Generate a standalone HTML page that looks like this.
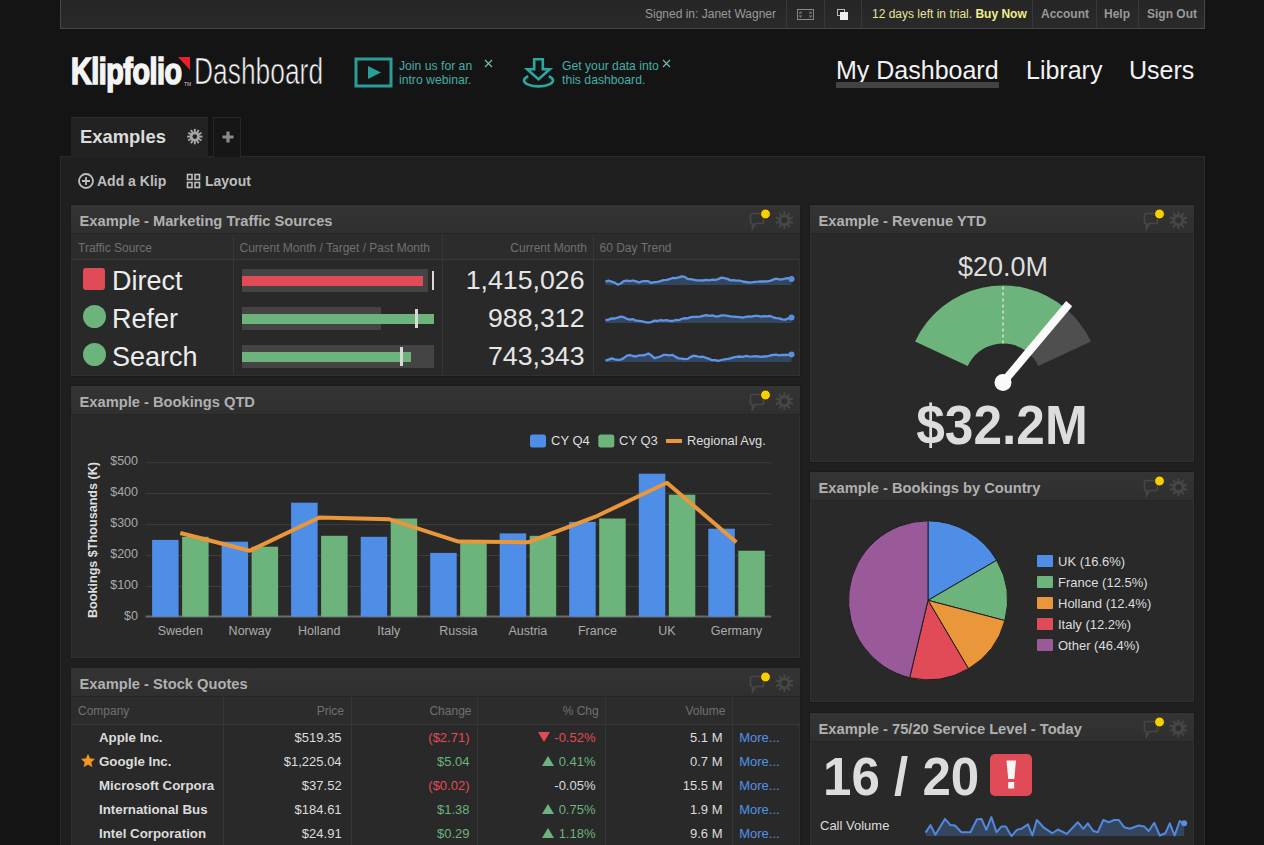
<!DOCTYPE html>
<html><head><meta charset="utf-8">
<style>
*{margin:0;padding:0;box-sizing:border-box}
html,body{width:1264px;height:845px;overflow:hidden;background:#141414;font-family:"Liberation Sans",sans-serif;color:#ccc}
.a{position:absolute;white-space:nowrap}
#topbar{left:60px;top:0;width:1145px;height:29px;background:linear-gradient(#252525,#2a2a2a);border:1px solid #474747;border-top:none}
.tb{position:absolute;top:0;height:28px;line-height:28px;font-size:12px;color:#9a9a9a;white-space:nowrap}
.sep{position:absolute;top:0;width:1px;height:28px;background:#383838}
#main{left:60px;top:156px;width:1145px;height:700px;background:#1f1f1f;border-left:1px solid #2a2a2a;border-top:1px solid #2a2a2a;border-right:1px solid #2c2c2c}
.klip{position:absolute;background:#292929;overflow:hidden;box-shadow:0 0 0 1px #1b1b1b,inset 0 0 0 1px #313131}
.kh{position:absolute;left:0;top:0;right:0;height:29px;background:linear-gradient(#343434,#2f2f2f);border-bottom:1px solid #262626}
.kt{position:absolute;left:8.5px;top:2px;line-height:29px;font-size:14.7px;font-weight:bold;color:#b0b0b0;white-space:nowrap}
.ki{position:absolute;top:3px;right:5px;width:48px;height:24px}
.promo{position:absolute;font-size:12.2px;line-height:14px;color:#45aea6;white-space:nowrap}
.nav{position:absolute;top:54.5px;font-size:25px;line-height:30px;color:#f2f2f2}
</style></head><body>
<!-- top bar -->
<div id="topbar" class="a">
  <div class="tb" style="left:584px">Signed in: Janet Wagner</div>
  <div class="sep" style="left:725px"></div>
  <svg class="a" style="left:736px;top:9px" width="17" height="11" viewBox="0 0 18 11" preserveAspectRatio="none"><rect x="0.5" y="0.5" width="17" height="10" fill="none" stroke="#8a8a8a"/><path d="M3 3l2 2M3 3h2M3 3v2M15 3l-2 2M15 3h-2M15 3v2M3 8l2-2M3 8h2M3 8v-2M15 8l-2-2M15 8h-2M15 8v-2" stroke="#8a8a8a" stroke-width="0.8" fill="none"/></svg>
  <div class="sep" style="left:763px"></div>
  <svg class="a" style="left:776px;top:9px" width="12" height="12" viewBox="0 0 12 12"><rect x="0.5" y="0.5" width="7" height="6" fill="#242424" stroke="#bbb"/><rect x="3" y="3" width="8" height="8" fill="#eee"/></svg>
  <div class="sep" style="left:800px"></div>
  <div class="tb" style="left:811px;color:#e6e39a">12 days left in trial. <b style="color:#f0ee8c">Buy Now</b></div>
  <div class="sep" style="left:971px"></div>
  <div class="tb" style="left:980px;font-weight:bold">Account</div>
  <div class="sep" style="left:1035px"></div>
  <div class="tb" style="left:1043px;font-weight:bold">Help</div>
  <div class="sep" style="left:1077px"></div>
  <div class="tb" style="left:1086px;font-weight:bold">Sign Out</div>
</div>

<!-- logo -->
<div class="a" style="left:71px;top:53px;font-size:37px;line-height:38px;font-weight:bold;color:#f4f4f4;-webkit-text-stroke:1.7px #f4f4f4;transform:scaleX(0.775);transform-origin:0 0;letter-spacing:-0.6px">Klipfolio</div>
<svg class="a" style="left:177px;top:56px" width="14" height="16"><path d="M1 1H13V14Z" fill="#e8202a"/></svg>
<div class="a" style="left:184px;top:82px;font-size:5px;line-height:5px;color:#ccc">TM</div>
<div class="a" style="left:194px;top:52.5px;font-size:37px;line-height:38px;color:#f4f4f4;-webkit-text-stroke:0.7px #141414;transform:scaleX(0.713);transform-origin:0 0">Dashboard</div>

<!-- promos -->
<svg class="a" style="left:354px;top:57px" width="39" height="31"><rect x="2" y="2" width="35" height="27" fill="none" stroke="#2a9d98" stroke-width="3"/><path d="M14 9L27 15.5L14 22Z" fill="#2a9d98"/></svg>
<div class="promo" style="left:399px;top:59px">Join us for an<br>intro webinar.</div>
<svg class="a" style="left:484px;top:59px" width="9" height="9"><path d="M1 1L8 8M8 1L1 8" stroke="#74c2b6" stroke-width="1.1"/></svg>
<svg class="a" style="left:521px;top:56px" width="34" height="32"><path d="M13.2 3.3H21.8V13.2H28.8L17.5 23.2L6.2 13.2H13.2Z" fill="none" stroke="#2aa79f" stroke-width="2.6" stroke-linejoin="miter"/><path d="M7.2 20.2A14.5 6 0 1 0 27.8 20.2" fill="none" stroke="#2aa79f" stroke-width="2.6"/></svg>
<div class="promo" style="left:562px;top:59px">Get your data into<br>this dashboard.</div>
<svg class="a" style="left:662px;top:59px" width="9" height="9"><path d="M1 1L8 8M8 1L1 8" stroke="#74c2b6" stroke-width="1.1"/></svg>

<!-- nav -->
<div class="nav" style="left:836px">My Dashboard</div>
<div class="a" style="left:836px;top:82px;width:163px;height:6px;background:#434343"></div>
<div class="nav" style="left:1026px">Library</div>
<div class="nav" style="left:1129px">Users</div>

<!-- tabs -->
<div id="main" class="a"></div>
<div class="a" style="left:71px;top:117px;width:137px;height:41px;background:#222;border-top:1px solid #2c2c2c"></div>
<div class="a" style="left:80px;top:126px;font-size:18.4px;line-height:22px;font-weight:bold;color:#dcdcdc">Examples</div>
<svg class="a" style="left:186px;top:128px" width="18" height="18" viewBox="0 0 18 18"><g transform="translate(8.8 8.6)" fill="#a6a6a6"><circle r="4.9"/><rect x="-0.95" y="-7.7" width="1.9" height="3.8" transform="rotate(0)"/><rect x="-0.95" y="-7.7" width="1.9" height="3.8" transform="rotate(30)"/><rect x="-0.95" y="-7.7" width="1.9" height="3.8" transform="rotate(60)"/><rect x="-0.95" y="-7.7" width="1.9" height="3.8" transform="rotate(90)"/><rect x="-0.95" y="-7.7" width="1.9" height="3.8" transform="rotate(120)"/><rect x="-0.95" y="-7.7" width="1.9" height="3.8" transform="rotate(150)"/><rect x="-0.95" y="-7.7" width="1.9" height="3.8" transform="rotate(180)"/><rect x="-0.95" y="-7.7" width="1.9" height="3.8" transform="rotate(210)"/><rect x="-0.95" y="-7.7" width="1.9" height="3.8" transform="rotate(240)"/><rect x="-0.95" y="-7.7" width="1.9" height="3.8" transform="rotate(270)"/><rect x="-0.95" y="-7.7" width="1.9" height="3.8" transform="rotate(300)"/><rect x="-0.95" y="-7.7" width="1.9" height="3.8" transform="rotate(330)"/><circle r="2.3" fill="#222"/></g></svg>
<div class="a" style="left:213px;top:117px;width:28px;height:40px;background:#161616;border:1px solid #262626;border-bottom:none"></div>
<svg class="a" style="left:221.6px;top:130.6px" width="12" height="12"><path d="M6 0.5V11.5M0.5 6H11.5" stroke="#8a8a8a" stroke-width="3.2"/></svg>

<!-- toolbar -->
<svg class="a" style="left:77px;top:172px" width="18" height="18"><circle cx="9" cy="9" r="7" fill="none" stroke="#bdbdbd" stroke-width="1.8"/><path d="M9 5V13M5 9H13" stroke="#bdbdbd" stroke-width="1.8"/></svg>
<div class="a" style="left:97px;top:172px;font-size:14px;line-height:18px;font-weight:bold;color:#bdbdbd">Add a Klip</div>
<svg class="a" style="left:186px;top:173px" width="15" height="16"><g fill="none" stroke="#bdbdbd" stroke-width="1.6"><rect x="1.5" y="1.5" width="4.5" height="5"/><rect x="9" y="1.5" width="4.5" height="5"/><rect x="1.5" y="9.5" width="4.5" height="5"/><rect x="9" y="9.5" width="4.5" height="5"/></g></svg>
<div class="a" style="left:205px;top:172px;font-size:14px;line-height:18px;font-weight:bold;color:#bdbdbd">Layout</div>

<div class="klip" style="left:71px;top:205px;width:729px;height:171px" id="k1"><div class="kh"><div class="kt">Example - Marketing Traffic Sources</div><svg class="ki" viewBox="0 0 48 24"><path d="M5 5.5h10a1.5 1.5 0 0 1 1.5 1.5v7a1.5 1.5 0 0 1-1.5 1.5h-6.5l-3 5v-5h-0.5a1.5 1.5 0 0 1-1.5-1.5v-7a1.5 1.5 0 0 1 1.5-1.5z" fill="none" stroke="#474747" stroke-width="1.7"/><circle cx="18.5" cy="6" r="4.9" fill="#f7d000" stroke="#2a2010" stroke-width="0.8"/><g transform="translate(37.4 12.2)" fill="#474747"><circle r="6"/><rect x="-1" y="-8.9" width="2" height="4.2" transform="rotate(0)"/><rect x="-1" y="-8.9" width="2" height="4.2" transform="rotate(36)"/><rect x="-1" y="-8.9" width="2" height="4.2" transform="rotate(72)"/><rect x="-1" y="-8.9" width="2" height="4.2" transform="rotate(108)"/><rect x="-1" y="-8.9" width="2" height="4.2" transform="rotate(144)"/><rect x="-1" y="-8.9" width="2" height="4.2" transform="rotate(180)"/><rect x="-1" y="-8.9" width="2" height="4.2" transform="rotate(216)"/><rect x="-1" y="-8.9" width="2" height="4.2" transform="rotate(252)"/><rect x="-1" y="-8.9" width="2" height="4.2" transform="rotate(288)"/><rect x="-1" y="-8.9" width="2" height="4.2" transform="rotate(324)"/><circle r="3" fill="#2f2f2f"/></g></svg></div><div class="a" style="left:0;top:29px;width:729px;height:26px;background:#2c2c2c;border-bottom:1px solid #3a3a3a"></div><div class="a" style="left:162px;top:29px;width:1px;height:140px;background:#363636"></div><div class="a" style="left:371px;top:29px;width:1px;height:140px;background:#363636"></div><div class="a" style="left:522px;top:29px;width:1px;height:140px;background:#363636"></div><div class="a" style="left:7px;top:35.8px;font-size:12px;line-height:14px;color:#707070;font-weight:400;">Traffic Source</div><div class="a" style="left:168.5px;top:35.8px;font-size:12px;line-height:14px;color:#707070;font-weight:400;">Current Month / Target / Past Month</div><div class="a" style="right:213px;top:35.8px;font-size:12px;line-height:14px;color:#707070;font-weight:400;">Current Month</div><div class="a" style="left:528.5px;top:35.8px;font-size:12px;line-height:14px;color:#707070;font-weight:400;">60 Day Trend</div><div class="a" style="left:12px;top:63.30000000000001px;width:22px;height:22px;border-radius:3px;background:#e14b57"></div><div class="a" style="left:41px;top:59.6px;font-size:27px;line-height:32px;color:#ececec;font-weight:400;">Direct</div><div class="a" style="right:215.5px;top:58.7px;font-size:26.7px;line-height:32px;color:#e6e6e6;font-weight:400;">1,415,026</div><div class="a" style="left:11.5px;top:100.39999999999998px;width:23px;height:23px;border-radius:50%;background:#6cb37c"></div><div class="a" style="left:41px;top:97.6px;font-size:27px;line-height:32px;color:#ececec;font-weight:400;">Refer</div><div class="a" style="right:215.5px;top:96.7px;font-size:26.7px;line-height:32px;color:#e6e6e6;font-weight:400;">988,312</div><div class="a" style="left:11.5px;top:138.39999999999998px;width:23px;height:23px;border-radius:50%;background:#6cb37c"></div><div class="a" style="left:41px;top:135.6px;font-size:27px;line-height:32px;color:#ececec;font-weight:400;">Search</div><div class="a" style="right:215.5px;top:134.7px;font-size:26.7px;line-height:32px;color:#e6e6e6;font-weight:400;">743,343</div><div class="a" style="left:171px;top:63.5px;width:186px;height:23px;background:#444"></div><div class="a" style="left:171px;top:70.5px;width:181px;height:10px;background:#e14b57"></div><div class="a" style="left:361.0px;top:65.5px;width:2px;height:19.5px;background:#d8d8d8"></div><div class="a" style="left:171px;top:101.5px;width:139px;height:23px;background:#444"></div><div class="a" style="left:171px;top:108.5px;width:192px;height:10px;background:#6cb37c"></div><div class="a" style="left:344.0px;top:103.5px;width:3px;height:19.5px;background:#d8d8d8"></div><div class="a" style="left:171px;top:139.5px;width:192px;height:23px;background:#444"></div><div class="a" style="left:171px;top:146.5px;width:168.5px;height:10px;background:#6cb37c"></div><div class="a" style="left:328.5px;top:141.5px;width:3px;height:19.5px;background:#d8d8d8"></div><svg class="a" style="left:0;top:0" width="729" height="170"><polygon points="534.5,80 534.5,76.6 537.6,75.7 540.6,76.6 543.7,77.6 546.7,79.6 549.8,78.5 552.8,76.1 555.9,75.6 558.9,76.2 562.0,75.5 565.0,76.3 568.1,77.5 571.1,76.3 574.2,76.2 577.2,76.2 580.3,77.9 583.3,77.2 586.4,76.8 589.4,76.2 592.4,75.2 595.5,74.8 598.5,74.2 601.6,73.0 604.6,73.1 607.7,72.3 610.7,71.3 613.8,71.8 616.8,74.1 619.9,74.2 622.9,74.8 626.0,75.4 629.0,75.3 632.1,75.5 635.1,74.9 638.2,75.3 641.2,74.6 644.3,74.8 647.3,74.1 650.4,72.6 653.4,73.1 656.5,73.9 659.5,75.4 662.5,75.2 665.6,75.7 668.6,75.7 671.7,76.5 674.7,77.0 677.8,77.5 680.8,77.3 683.9,76.8 686.9,76.7 690.0,76.3 693.0,76.5 696.1,76.3 699.1,75.8 702.2,74.7 705.2,73.7 708.3,74.5 711.3,74.4 714.4,73.5 717.4,73.2 720.5,73.9 720.5,80" fill="#34455e"/><polyline points="534.5,76.6 537.6,75.7 540.6,76.6 543.7,77.6 546.7,79.6 549.8,78.5 552.8,76.1 555.9,75.6 558.9,76.2 562.0,75.5 565.0,76.3 568.1,77.5 571.1,76.3 574.2,76.2 577.2,76.2 580.3,77.9 583.3,77.2 586.4,76.8 589.4,76.2 592.4,75.2 595.5,74.8 598.5,74.2 601.6,73.0 604.6,73.1 607.7,72.3 610.7,71.3 613.8,71.8 616.8,74.1 619.9,74.2 622.9,74.8 626.0,75.4 629.0,75.3 632.1,75.5 635.1,74.9 638.2,75.3 641.2,74.6 644.3,74.8 647.3,74.1 650.4,72.6 653.4,73.1 656.5,73.9 659.5,75.4 662.5,75.2 665.6,75.7 668.6,75.7 671.7,76.5 674.7,77.0 677.8,77.5 680.8,77.3 683.9,76.8 686.9,76.7 690.0,76.3 693.0,76.5 696.1,76.3 699.1,75.8 702.2,74.7 705.2,73.7 708.3,74.5 711.3,74.4 714.4,73.5 717.4,73.2 720.5,73.9" fill="none" stroke="#5f95e8" stroke-width="2.3" stroke-linejoin="round"/><circle cx="720.5" cy="73.9" r="3" fill="#5a8fe0"/><polygon points="534.5,118 534.5,115.1 537.6,114.6 540.6,113.4 543.7,113.5 546.7,112.6 549.8,111.7 552.8,112.2 555.9,113.8 558.9,114.7 562.0,114.2 565.0,115.7 568.1,115.8 571.1,116.3 574.2,117.1 577.2,117.7 580.3,117.2 583.3,115.6 586.4,116.0 589.4,115.1 592.4,115.6 595.5,115.2 598.5,115.8 601.6,116.0 604.6,115.0 607.7,115.2 610.7,114.0 613.8,113.2 616.8,113.3 619.9,112.1 622.9,111.9 626.0,111.8 629.0,111.7 632.1,110.8 635.1,110.2 638.2,110.8 641.2,110.3 644.3,111.4 647.3,111.3 650.4,110.4 653.4,110.4 656.5,110.8 659.5,111.3 662.5,111.6 665.6,111.9 668.6,112.2 671.7,112.6 674.7,111.8 677.8,111.5 680.8,111.6 683.9,110.9 686.9,110.8 690.0,111.6 693.0,111.2 696.1,111.4 699.1,111.0 702.2,112.3 705.2,113.2 708.3,113.3 711.3,114.3 714.4,114.6 717.4,113.3 720.5,112.5 720.5,118" fill="#34455e"/><polyline points="534.5,115.1 537.6,114.6 540.6,113.4 543.7,113.5 546.7,112.6 549.8,111.7 552.8,112.2 555.9,113.8 558.9,114.7 562.0,114.2 565.0,115.7 568.1,115.8 571.1,116.3 574.2,117.1 577.2,117.7 580.3,117.2 583.3,115.6 586.4,116.0 589.4,115.1 592.4,115.6 595.5,115.2 598.5,115.8 601.6,116.0 604.6,115.0 607.7,115.2 610.7,114.0 613.8,113.2 616.8,113.3 619.9,112.1 622.9,111.9 626.0,111.8 629.0,111.7 632.1,110.8 635.1,110.2 638.2,110.8 641.2,110.3 644.3,111.4 647.3,111.3 650.4,110.4 653.4,110.4 656.5,110.8 659.5,111.3 662.5,111.6 665.6,111.9 668.6,112.2 671.7,112.6 674.7,111.8 677.8,111.5 680.8,111.6 683.9,110.9 686.9,110.8 690.0,111.6 693.0,111.2 696.1,111.4 699.1,111.0 702.2,112.3 705.2,113.2 708.3,113.3 711.3,114.3 714.4,114.6 717.4,113.3 720.5,112.5" fill="none" stroke="#5f95e8" stroke-width="2.3" stroke-linejoin="round"/><circle cx="720.5" cy="112.5" r="3" fill="#5a8fe0"/><polygon points="534.5,157 534.5,155.7 537.6,154.6 540.6,153.4 543.7,154.4 546.7,154.8 549.8,154.6 552.8,153.1 555.9,150.7 558.9,150.1 562.0,151.0 565.0,151.5 568.1,150.4 571.1,150.4 574.2,150.0 577.2,148.4 580.3,150.3 583.3,153.2 586.4,152.4 589.4,151.5 592.4,149.9 595.5,149.9 598.5,150.3 601.6,149.9 604.6,151.9 607.7,153.4 610.7,153.7 613.8,154.2 616.8,153.9 619.9,151.8 622.9,150.7 626.0,151.3 629.0,152.0 632.1,151.7 635.1,152.9 638.2,153.9 641.2,155.2 644.3,155.1 647.3,155.9 650.4,155.0 653.4,154.3 656.5,153.9 659.5,153.3 662.5,152.3 665.6,151.9 668.6,151.5 671.7,151.8 674.7,151.0 677.8,151.4 680.8,151.6 683.9,151.1 686.9,151.5 690.0,151.9 693.0,151.5 696.1,151.4 699.1,150.5 702.2,149.9 705.2,149.7 708.3,150.3 711.3,149.8 714.4,150.0 717.4,149.8 720.5,149.4 720.5,157" fill="#34455e"/><polyline points="534.5,155.7 537.6,154.6 540.6,153.4 543.7,154.4 546.7,154.8 549.8,154.6 552.8,153.1 555.9,150.7 558.9,150.1 562.0,151.0 565.0,151.5 568.1,150.4 571.1,150.4 574.2,150.0 577.2,148.4 580.3,150.3 583.3,153.2 586.4,152.4 589.4,151.5 592.4,149.9 595.5,149.9 598.5,150.3 601.6,149.9 604.6,151.9 607.7,153.4 610.7,153.7 613.8,154.2 616.8,153.9 619.9,151.8 622.9,150.7 626.0,151.3 629.0,152.0 632.1,151.7 635.1,152.9 638.2,153.9 641.2,155.2 644.3,155.1 647.3,155.9 650.4,155.0 653.4,154.3 656.5,153.9 659.5,153.3 662.5,152.3 665.6,151.9 668.6,151.5 671.7,151.8 674.7,151.0 677.8,151.4 680.8,151.6 683.9,151.1 686.9,151.5 690.0,151.9 693.0,151.5 696.1,151.4 699.1,150.5 702.2,149.9 705.2,149.7 708.3,150.3 711.3,149.8 714.4,150.0 717.4,149.8 720.5,149.4" fill="none" stroke="#5f95e8" stroke-width="2.3" stroke-linejoin="round"/><circle cx="720.5" cy="149.4" r="3" fill="#5a8fe0"/></svg></div>
<div class="klip" style="left:810px;top:205px;width:384px;height:257px" id="k2"><div class="kh"><div class="kt">Example - Revenue YTD</div><svg class="ki" viewBox="0 0 48 24"><path d="M5 5.5h10a1.5 1.5 0 0 1 1.5 1.5v7a1.5 1.5 0 0 1-1.5 1.5h-6.5l-3 5v-5h-0.5a1.5 1.5 0 0 1-1.5-1.5v-7a1.5 1.5 0 0 1 1.5-1.5z" fill="none" stroke="#474747" stroke-width="1.7"/><circle cx="18.5" cy="6" r="4.9" fill="#f7d000" stroke="#2a2010" stroke-width="0.8"/><g transform="translate(37.4 12.2)" fill="#474747"><circle r="6"/><rect x="-1" y="-8.9" width="2" height="4.2" transform="rotate(0)"/><rect x="-1" y="-8.9" width="2" height="4.2" transform="rotate(36)"/><rect x="-1" y="-8.9" width="2" height="4.2" transform="rotate(72)"/><rect x="-1" y="-8.9" width="2" height="4.2" transform="rotate(108)"/><rect x="-1" y="-8.9" width="2" height="4.2" transform="rotate(144)"/><rect x="-1" y="-8.9" width="2" height="4.2" transform="rotate(180)"/><rect x="-1" y="-8.9" width="2" height="4.2" transform="rotate(216)"/><rect x="-1" y="-8.9" width="2" height="4.2" transform="rotate(252)"/><rect x="-1" y="-8.9" width="2" height="4.2" transform="rotate(288)"/><rect x="-1" y="-8.9" width="2" height="4.2" transform="rotate(324)"/><circle r="3" fill="#2f2f2f"/></g></svg></div><div class="a" style="left:-7px;width:400px;text-align:center;top:45.6px;font-size:27px;line-height:32px;color:#dedede;font-weight:400;">$20.0M</div><svg class="a" style="left:0;top:0" width="384" height="256"><path d="M105.09 136.51 A97 97 0 0 1 255.35 103.19 L218.07 147.62 A39 39 0 0 0 157.65 161.02Z" fill="#6cb37c"/><path d="M255.35 103.19 A97 97 0 0 1 280.91 136.51 L228.35 161.02 A39 39 0 0 0 218.07 147.62Z" fill="#4f4f4f"/><line x1="193" y1="81.5" x2="193" y2="138.5" stroke="#e8e8e8" stroke-width="1.5" stroke-dasharray="3 3" opacity="0.85"/><line x1="193" y1="177.5" x2="259.2" y2="98.6" stroke="#fafafa" stroke-width="8"/><circle cx="193" cy="177.5" r="8.5" fill="#fafafa"/></svg><div class="a" style="left:-8px;width:400px;text-align:center;top:186.7px;font-size:55px;line-height:66px;color:#dddddd;font-weight:700;transform:scaleX(0.935)">$32.2M</div></div>
<div class="klip" style="left:71px;top:386px;width:729px;height:272px" id="k3"><div class="kh"><div class="kt">Example - Bookings QTD</div><svg class="ki" viewBox="0 0 48 24"><path d="M5 5.5h10a1.5 1.5 0 0 1 1.5 1.5v7a1.5 1.5 0 0 1-1.5 1.5h-6.5l-3 5v-5h-0.5a1.5 1.5 0 0 1-1.5-1.5v-7a1.5 1.5 0 0 1 1.5-1.5z" fill="none" stroke="#474747" stroke-width="1.7"/><circle cx="18.5" cy="6" r="4.9" fill="#f7d000" stroke="#2a2010" stroke-width="0.8"/><g transform="translate(37.4 12.2)" fill="#474747"><circle r="6"/><rect x="-1" y="-8.9" width="2" height="4.2" transform="rotate(0)"/><rect x="-1" y="-8.9" width="2" height="4.2" transform="rotate(36)"/><rect x="-1" y="-8.9" width="2" height="4.2" transform="rotate(72)"/><rect x="-1" y="-8.9" width="2" height="4.2" transform="rotate(108)"/><rect x="-1" y="-8.9" width="2" height="4.2" transform="rotate(144)"/><rect x="-1" y="-8.9" width="2" height="4.2" transform="rotate(180)"/><rect x="-1" y="-8.9" width="2" height="4.2" transform="rotate(216)"/><rect x="-1" y="-8.9" width="2" height="4.2" transform="rotate(252)"/><rect x="-1" y="-8.9" width="2" height="4.2" transform="rotate(288)"/><rect x="-1" y="-8.9" width="2" height="4.2" transform="rotate(324)"/><circle r="3" fill="#2f2f2f"/></g></svg></div><svg class="a" style="left:0;top:0" width="729" height="271"><line x1="74.5" y1="200.5" x2="700.2" y2="200.5" stroke="#3d3d3d" stroke-width="1"/><line x1="74.5" y1="169.5" x2="700.2" y2="169.5" stroke="#3d3d3d" stroke-width="1"/><line x1="74.5" y1="138.6" x2="700.2" y2="138.6" stroke="#3d3d3d" stroke-width="1"/><line x1="74.5" y1="107.6" x2="700.2" y2="107.6" stroke="#3d3d3d" stroke-width="1"/><line x1="74.5" y1="76.7" x2="700.2" y2="76.7" stroke="#3d3d3d" stroke-width="1"/><line x1="74.5" y1="230.6" x2="700.2" y2="230.6" stroke="#6a6a6a" stroke-width="2"/><rect x="81.1" y="153.9" width="26.5" height="76.7" fill="#4f8ee6"/><rect x="111.1" y="150.8" width="26.5" height="79.8" fill="#6cb37c"/><rect x="150.6" y="155.7" width="26.5" height="74.9" fill="#4f8ee6"/><rect x="180.6" y="160.7" width="26.5" height="69.9" fill="#6cb37c"/><rect x="220.1" y="116.7" width="26.5" height="113.9" fill="#4f8ee6"/><rect x="250.1" y="149.8" width="26.5" height="80.8" fill="#6cb37c"/><rect x="289.7" y="150.8" width="26.5" height="79.8" fill="#4f8ee6"/><rect x="319.7" y="132.5" width="26.5" height="98.1" fill="#6cb37c"/><rect x="359.2" y="166.9" width="26.5" height="63.7" fill="#4f8ee6"/><rect x="389.2" y="156.3" width="26.5" height="74.3" fill="#6cb37c"/><rect x="428.7" y="147.4" width="26.5" height="83.2" fill="#4f8ee6"/><rect x="458.7" y="149.8" width="26.5" height="80.8" fill="#6cb37c"/><rect x="498.2" y="135.9" width="26.5" height="94.7" fill="#4f8ee6"/><rect x="528.2" y="132.5" width="26.5" height="98.1" fill="#6cb37c"/><rect x="567.8" y="87.7" width="26.5" height="142.9" fill="#4f8ee6"/><rect x="597.8" y="108.7" width="26.5" height="121.9" fill="#6cb37c"/><rect x="637.3" y="142.7" width="26.5" height="87.9" fill="#4f8ee6"/><rect x="667.3" y="164.7" width="26.5" height="65.9" fill="#6cb37c"/><polyline points="109.3,147.0 178.8,164.7 248.3,131.5 317.8,133.2 387.4,155.6 456.9,156.3 526.4,129.8 595.9,96.7 665.4,156.3" fill="none" stroke="#ea963a" stroke-width="4" stroke-linejoin="round"/><rect x="459" y="48.5" width="16" height="13" fill="#4f8ee6" rx="2.5"/><rect x="527.3" y="48.5" width="16" height="13" fill="#6cb37c" rx="2.5"/><rect x="595" y="53" width="16" height="4" fill="#ea963a"/></svg><div class="a" style="right:662px;top:223.1px;font-size:12.5px;line-height:15px;color:#a8a8a8;font-weight:400;">$0</div><div class="a" style="right:662px;top:192.1px;font-size:12.5px;line-height:15px;color:#a8a8a8;font-weight:400;">$100</div><div class="a" style="right:662px;top:161.2px;font-size:12.5px;line-height:15px;color:#a8a8a8;font-weight:400;">$200</div><div class="a" style="right:662px;top:130.2px;font-size:12.5px;line-height:15px;color:#a8a8a8;font-weight:400;">$300</div><div class="a" style="right:662px;top:99.3px;font-size:12.5px;line-height:15px;color:#a8a8a8;font-weight:400;">$400</div><div class="a" style="right:662px;top:68.4px;font-size:12.5px;line-height:15px;color:#a8a8a8;font-weight:400;">$500</div><div class="a" style="left:-90.73888888888888px;width:400px;text-align:center;top:237.8px;font-size:12.5px;line-height:15px;color:#ababab;font-weight:400;">Sweden</div><div class="a" style="left:-21.21666666666667px;width:400px;text-align:center;top:237.8px;font-size:12.5px;line-height:15px;color:#ababab;font-weight:400;">Norway</div><div class="a" style="left:48.30555555555554px;width:400px;text-align:center;top:237.8px;font-size:12.5px;line-height:15px;color:#ababab;font-weight:400;">Holland</div><div class="a" style="left:117.82777777777778px;width:400px;text-align:center;top:237.8px;font-size:12.5px;line-height:15px;color:#ababab;font-weight:400;">Italy</div><div class="a" style="left:187.35000000000002px;width:400px;text-align:center;top:237.8px;font-size:12.5px;line-height:15px;color:#ababab;font-weight:400;">Russia</div><div class="a" style="left:256.87222222222226px;width:400px;text-align:center;top:237.8px;font-size:12.5px;line-height:15px;color:#ababab;font-weight:400;">Austria</div><div class="a" style="left:326.3944444444444px;width:400px;text-align:center;top:237.8px;font-size:12.5px;line-height:15px;color:#ababab;font-weight:400;">France</div><div class="a" style="left:395.91666666666674px;width:400px;text-align:center;top:237.8px;font-size:12.5px;line-height:15px;color:#ababab;font-weight:400;">UK</div><div class="a" style="left:465.43888888888887px;width:400px;text-align:center;top:237.8px;font-size:12.5px;line-height:15px;color:#ababab;font-weight:400;">Germany</div><div class="a" style="left:480px;top:46.7px;font-size:13px;line-height:16px;color:#dddddd;font-weight:400;">CY Q4</div><div class="a" style="left:548px;top:46.7px;font-size:13px;line-height:16px;color:#dddddd;font-weight:400;">CY Q3</div><div class="a" style="left:616px;top:47.3px;font-size:12.8px;line-height:15px;color:#dddddd;font-weight:400;">Regional Avg.</div><div class="a" style="left:-78px;top:145px;width:200px;height:18px;line-height:18px;text-align:center;font-size:12.6px;font-weight:bold;color:#dedede;transform:rotate(-90deg)">Bookings $Thousands (K)</div></div>
<div class="klip" style="left:810px;top:472px;width:384px;height:230px" id="k4"><div class="kh"><div class="kt">Example - Bookings by Country</div><svg class="ki" viewBox="0 0 48 24"><path d="M5 5.5h10a1.5 1.5 0 0 1 1.5 1.5v7a1.5 1.5 0 0 1-1.5 1.5h-6.5l-3 5v-5h-0.5a1.5 1.5 0 0 1-1.5-1.5v-7a1.5 1.5 0 0 1 1.5-1.5z" fill="none" stroke="#474747" stroke-width="1.7"/><circle cx="18.5" cy="6" r="4.9" fill="#f7d000" stroke="#2a2010" stroke-width="0.8"/><g transform="translate(37.4 12.2)" fill="#474747"><circle r="6"/><rect x="-1" y="-8.9" width="2" height="4.2" transform="rotate(0)"/><rect x="-1" y="-8.9" width="2" height="4.2" transform="rotate(36)"/><rect x="-1" y="-8.9" width="2" height="4.2" transform="rotate(72)"/><rect x="-1" y="-8.9" width="2" height="4.2" transform="rotate(108)"/><rect x="-1" y="-8.9" width="2" height="4.2" transform="rotate(144)"/><rect x="-1" y="-8.9" width="2" height="4.2" transform="rotate(180)"/><rect x="-1" y="-8.9" width="2" height="4.2" transform="rotate(216)"/><rect x="-1" y="-8.9" width="2" height="4.2" transform="rotate(252)"/><rect x="-1" y="-8.9" width="2" height="4.2" transform="rotate(288)"/><rect x="-1" y="-8.9" width="2" height="4.2" transform="rotate(324)"/><circle r="3" fill="#2f2f2f"/></g></svg></div><svg class="a" style="left:0;top:0" width="384" height="230"><path d="M118 128.29999999999995 L118.00 48.80 A79.5 79.5 0 0 1 186.68 88.26Z" fill="#4f8ee6" stroke="#1e1e1e" stroke-width="1"/><path d="M118 128.29999999999995 L186.68 88.26 A79.5 79.5 0 0 1 194.88 148.55Z" fill="#6cb37c" stroke="#1e1e1e" stroke-width="1"/><path d="M118 128.29999999999995 L194.88 148.55 A79.5 79.5 0 0 1 158.47 196.73Z" fill="#ea963a" stroke="#1e1e1e" stroke-width="1"/><path d="M118 128.29999999999995 L158.47 196.73 A79.5 79.5 0 0 1 99.68 205.66Z" fill="#e14b57" stroke="#1e1e1e" stroke-width="1"/><path d="M118 128.29999999999995 L99.68 205.66 A79.5 79.5 0 0 1 118.00 48.80Z" fill="#9a5a9a" stroke="#1e1e1e" stroke-width="1"/><rect x="227" y="83" width="16" height="12" fill="#4f8ee6" rx="1"/><rect x="227" y="104" width="16" height="12" fill="#6cb37c" rx="1"/><rect x="227" y="125" width="16" height="12" fill="#ea963a" rx="1"/><rect x="227" y="146" width="16" height="12" fill="#e14b57" rx="1"/><rect x="227" y="167" width="16" height="12" fill="#9a5a9a" rx="1"/></svg><div class="a" style="left:248px;top:82.1px;font-size:13px;line-height:16px;color:#dddddd;font-weight:400;">UK (16.6%)</div><div class="a" style="left:248px;top:103.1px;font-size:13px;line-height:16px;color:#dddddd;font-weight:400;">France (12.5%)</div><div class="a" style="left:248px;top:124.1px;font-size:13px;line-height:16px;color:#dddddd;font-weight:400;">Holland (12.4%)</div><div class="a" style="left:248px;top:145.1px;font-size:13px;line-height:16px;color:#dddddd;font-weight:400;">Italy (12.2%)</div><div class="a" style="left:248px;top:166.1px;font-size:13px;line-height:16px;color:#dddddd;font-weight:400;">Other (46.4%)</div></div>
<div class="klip" style="left:71px;top:668px;width:729px;height:200px" id="k5"><div class="kh"><div class="kt">Example - Stock Quotes</div><svg class="ki" viewBox="0 0 48 24"><path d="M5 5.5h10a1.5 1.5 0 0 1 1.5 1.5v7a1.5 1.5 0 0 1-1.5 1.5h-6.5l-3 5v-5h-0.5a1.5 1.5 0 0 1-1.5-1.5v-7a1.5 1.5 0 0 1 1.5-1.5z" fill="none" stroke="#474747" stroke-width="1.7"/><circle cx="18.5" cy="6" r="4.9" fill="#f7d000" stroke="#2a2010" stroke-width="0.8"/><g transform="translate(37.4 12.2)" fill="#474747"><circle r="6"/><rect x="-1" y="-8.9" width="2" height="4.2" transform="rotate(0)"/><rect x="-1" y="-8.9" width="2" height="4.2" transform="rotate(36)"/><rect x="-1" y="-8.9" width="2" height="4.2" transform="rotate(72)"/><rect x="-1" y="-8.9" width="2" height="4.2" transform="rotate(108)"/><rect x="-1" y="-8.9" width="2" height="4.2" transform="rotate(144)"/><rect x="-1" y="-8.9" width="2" height="4.2" transform="rotate(180)"/><rect x="-1" y="-8.9" width="2" height="4.2" transform="rotate(216)"/><rect x="-1" y="-8.9" width="2" height="4.2" transform="rotate(252)"/><rect x="-1" y="-8.9" width="2" height="4.2" transform="rotate(288)"/><rect x="-1" y="-8.9" width="2" height="4.2" transform="rotate(324)"/><circle r="3" fill="#2f2f2f"/></g></svg></div><div class="a" style="left:0;top:29px;width:729px;height:28px;background:#2c2c2c;border-bottom:1px solid #3a3a3a"></div><div class="a" style="left:152px;top:29px;width:1px;height:180px;background:#363636"></div><div class="a" style="left:280px;top:29px;width:1px;height:180px;background:#363636"></div><div class="a" style="left:406px;top:29px;width:1px;height:180px;background:#363636"></div><div class="a" style="left:534px;top:29px;width:1px;height:180px;background:#363636"></div><div class="a" style="left:661px;top:29px;width:1px;height:180px;background:#363636"></div><div class="a" style="left:7px;top:36.2px;font-size:12px;line-height:14px;color:#707070;font-weight:400;">Company</div><div class="a" style="right:456px;top:36.2px;font-size:12px;line-height:14px;color:#707070;font-weight:400;">Price</div><div class="a" style="right:328.5px;top:36.2px;font-size:12px;line-height:14px;color:#707070;font-weight:400;">Change</div><div class="a" style="right:201.29999999999995px;top:36.2px;font-size:12px;line-height:14px;color:#707070;font-weight:400;">% Chg</div><div class="a" style="right:74.60000000000002px;top:36.2px;font-size:12px;line-height:14px;color:#707070;font-weight:400;">Volume</div><div class="a" style="left:28px;top:61.7px;font-size:13.3px;line-height:16px;color:#dcdcdc;font-weight:700;">Apple Inc.</div><div class="a" style="right:458.4px;top:61.8px;font-size:13px;line-height:16px;color:#dcdcdc;font-weight:400;">$519.35</div><div class="a" style="right:330.5px;top:61.8px;font-size:13px;line-height:16px;color:#e14b57;font-weight:400;">($2.71)</div><div class="a" style="right:204.5px;top:61.8px;font-size:13px;line-height:16px;color:#e14b57;font-weight:400;">-0.52%</div><svg class="a" style="left:467px;top:64.29999999999995px" width="13" height="11"><path d="M0 0H12L6 10Z" fill="#e14b57"/></svg><div class="a" style="right:77.5px;top:61.8px;font-size:13px;line-height:16px;color:#dcdcdc;font-weight:400;">5.1 M</div><div class="a" style="left:668.2px;top:61.8px;font-size:13px;line-height:16px;color:#4f93e6;font-weight:400;">More...</div><div class="a" style="left:28px;top:85.7px;font-size:13.3px;line-height:16px;color:#dcdcdc;font-weight:700;">Google Inc.</div><div class="a" style="right:458.4px;top:85.8px;font-size:13px;line-height:16px;color:#dcdcdc;font-weight:400;">$1,225.04</div><div class="a" style="right:330.5px;top:85.8px;font-size:13px;line-height:16px;color:#6cb37c;font-weight:400;">$5.04</div><div class="a" style="right:204.5px;top:85.8px;font-size:13px;line-height:16px;color:#6cb37c;font-weight:400;">0.41%</div><svg class="a" style="left:471px;top:87.79999999999995px" width="13" height="11"><path d="M0 10H12L6 0Z" fill="#6cb37c"/></svg><div class="a" style="right:77.5px;top:85.8px;font-size:13px;line-height:16px;color:#dcdcdc;font-weight:400;">0.7 M</div><div class="a" style="left:668.2px;top:85.8px;font-size:13px;line-height:16px;color:#4f93e6;font-weight:400;">More...</div><div class="a" style="left:28px;top:109.7px;font-size:13.3px;line-height:16px;color:#dcdcdc;font-weight:700;">Microsoft Corpora</div><div class="a" style="right:458.4px;top:109.8px;font-size:13px;line-height:16px;color:#dcdcdc;font-weight:400;">$37.52</div><div class="a" style="right:330.5px;top:109.8px;font-size:13px;line-height:16px;color:#e14b57;font-weight:400;">($0.02)</div><div class="a" style="right:204.5px;top:109.8px;font-size:13px;line-height:16px;color:#dcdcdc;font-weight:400;">-0.05%</div><div class="a" style="right:77.5px;top:109.8px;font-size:13px;line-height:16px;color:#dcdcdc;font-weight:400;">15.5 M</div><div class="a" style="left:668.2px;top:109.8px;font-size:13px;line-height:16px;color:#4f93e6;font-weight:400;">More...</div><div class="a" style="left:28px;top:133.7px;font-size:13.3px;line-height:16px;color:#dcdcdc;font-weight:700;">International Bus</div><div class="a" style="right:458.4px;top:133.8px;font-size:13px;line-height:16px;color:#dcdcdc;font-weight:400;">$184.61</div><div class="a" style="right:330.5px;top:133.8px;font-size:13px;line-height:16px;color:#6cb37c;font-weight:400;">$1.38</div><div class="a" style="right:204.5px;top:133.8px;font-size:13px;line-height:16px;color:#6cb37c;font-weight:400;">0.75%</div><svg class="a" style="left:471px;top:135.79999999999995px" width="13" height="11"><path d="M0 10H12L6 0Z" fill="#6cb37c"/></svg><div class="a" style="right:77.5px;top:133.8px;font-size:13px;line-height:16px;color:#dcdcdc;font-weight:400;">1.9 M</div><div class="a" style="left:668.2px;top:133.8px;font-size:13px;line-height:16px;color:#4f93e6;font-weight:400;">More...</div><div class="a" style="left:28px;top:157.7px;font-size:13.3px;line-height:16px;color:#dcdcdc;font-weight:700;">Intel Corporation</div><div class="a" style="right:458.4px;top:157.8px;font-size:13px;line-height:16px;color:#dcdcdc;font-weight:400;">$24.91</div><div class="a" style="right:330.5px;top:157.8px;font-size:13px;line-height:16px;color:#6cb37c;font-weight:400;">$0.29</div><div class="a" style="right:204.5px;top:157.8px;font-size:13px;line-height:16px;color:#6cb37c;font-weight:400;">1.18%</div><svg class="a" style="left:471px;top:159.79999999999995px" width="13" height="11"><path d="M0 10H12L6 0Z" fill="#6cb37c"/></svg><div class="a" style="right:77.5px;top:157.8px;font-size:13px;line-height:16px;color:#dcdcdc;font-weight:400;">9.6 M</div><div class="a" style="left:668.2px;top:157.8px;font-size:13px;line-height:16px;color:#4f93e6;font-weight:400;">More...</div><svg class="a" style="left:9.5px;top:86px" width="14" height="14" viewBox="0 0 24 24"><path d="M12 1l3.1 7.2 7.8.7-5.9 5.1 1.8 7.6L12 17.6 5.2 21.6 7 14 1.1 8.9l7.8-.7z" fill="#f39a22" stroke="#f39a22" stroke-width="1.2" stroke-linejoin="round"/></svg></div>
<div class="klip" style="left:810px;top:713px;width:384px;height:150px" id="k6"><div class="kh"><div class="kt">Example - 75/20 Service Level - Today</div><svg class="ki" viewBox="0 0 48 24"><path d="M5 5.5h10a1.5 1.5 0 0 1 1.5 1.5v7a1.5 1.5 0 0 1-1.5 1.5h-6.5l-3 5v-5h-0.5a1.5 1.5 0 0 1-1.5-1.5v-7a1.5 1.5 0 0 1 1.5-1.5z" fill="none" stroke="#474747" stroke-width="1.7"/><circle cx="18.5" cy="6" r="4.9" fill="#f7d000" stroke="#2a2010" stroke-width="0.8"/><g transform="translate(37.4 12.2)" fill="#474747"><circle r="6"/><rect x="-1" y="-8.9" width="2" height="4.2" transform="rotate(0)"/><rect x="-1" y="-8.9" width="2" height="4.2" transform="rotate(36)"/><rect x="-1" y="-8.9" width="2" height="4.2" transform="rotate(72)"/><rect x="-1" y="-8.9" width="2" height="4.2" transform="rotate(108)"/><rect x="-1" y="-8.9" width="2" height="4.2" transform="rotate(144)"/><rect x="-1" y="-8.9" width="2" height="4.2" transform="rotate(180)"/><rect x="-1" y="-8.9" width="2" height="4.2" transform="rotate(216)"/><rect x="-1" y="-8.9" width="2" height="4.2" transform="rotate(252)"/><rect x="-1" y="-8.9" width="2" height="4.2" transform="rotate(288)"/><rect x="-1" y="-8.9" width="2" height="4.2" transform="rotate(324)"/><circle r="3" fill="#2f2f2f"/></g></svg></div><div class="a" style="left:12.5px;top:31.8px;font-size:53.5px;line-height:64px;color:#dddddd;font-weight:700;transform:scaleX(0.955);transform-origin:0 50%">16 / 20</div><div class="a" style="left:180px;top:41px;width:42px;height:42px;border-radius:5px;background:#e14b57"></div><svg class="a" style="left:180px;top:41px" width="42" height="42"><path d="M16.5 6.5H26L24.3 25H18.2Z" fill="#f6f6f6"/><rect x="18.2" y="28" width="6" height="6.5" fill="#f6f6f6"/></svg><div class="a" style="left:10px;top:105.0px;font-size:13px;line-height:16px;color:#dddddd;font-weight:400;">Call Volume</div><svg class="a" style="left:0;top:0" width="384" height="150"><polygon points="115.6,123 115.6,119.6 120.5,112.1 125.4,121.8 134.9,105.9 140.4,112.1 144.9,112.5 151.5,119.2 160.4,119.2 167.0,106.3 171.5,105.9 176.3,116.9 181.4,104.1 186.5,119.2 191.4,113.6 195.8,113.6 201.4,123.1 206.9,116.9 211.3,115.8 218.0,111.4 222.4,122.5 226.8,107.0 233.5,114.3 242.4,120.3 247.9,116.5 256.8,120.9 267.8,109.2 273.4,115.8 277.8,110.3 283.3,118.0 287.8,119.2 293.3,107.0 298.8,109.2 304.4,107.0 308.8,107.0 314.3,114.3 319.9,115.8 328.7,112.5 334.3,113.6 338.7,118.0 344.3,109.8 349.8,122.5 355.3,120.3 359.8,110.3 364.6,122.5 369.7,108.1 374.2,110.3 374.2,123" fill="#34455e"/><polyline points="115.6,119.6 120.5,112.1 125.4,121.8 134.9,105.9 140.4,112.1 144.9,112.5 151.5,119.2 160.4,119.2 167.0,106.3 171.5,105.9 176.3,116.9 181.4,104.1 186.5,119.2 191.4,113.6 195.8,113.6 201.4,123.1 206.9,116.9 211.3,115.8 218.0,111.4 222.4,122.5 226.8,107.0 233.5,114.3 242.4,120.3 247.9,116.5 256.8,120.9 267.8,109.2 273.4,115.8 277.8,110.3 283.3,118.0 287.8,119.2 293.3,107.0 298.8,109.2 304.4,107.0 308.8,107.0 314.3,114.3 319.9,115.8 328.7,112.5 334.3,113.6 338.7,118.0 344.3,109.8 349.8,122.5 355.3,120.3 359.8,110.3 364.6,122.5 369.7,108.1 374.2,110.3" fill="none" stroke="#5289df" stroke-width="2" stroke-linejoin="round"/><circle cx="374.2" cy="110.3" r="3" fill="#5a8fe0"/></svg></div>
</body></html>
